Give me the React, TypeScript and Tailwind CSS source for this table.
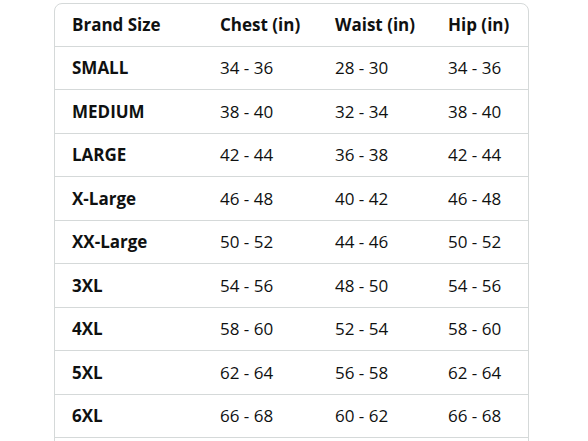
import React from "react";

const rows: [string, string, string, string][] = [
  ["SMALL", "34 - 36", "28 - 30", "34 - 36"],
  ["MEDIUM", "38 - 40", "32 - 34", "38 - 40"],
  ["LARGE", "42 - 44", "36 - 38", "42 - 44"],
  ["X-Large", "46 - 48", "40 - 42", "46 - 48"],
  ["XX-Large", "50 - 52", "44 - 46", "50 - 52"],
  ["3XL", "54 - 56", "48 - 50", "54 - 56"],
  ["4XL", "58 - 60", "52 - 54", "58 - 60"],
  ["5XL", "62 - 64", "56 - 58", "62 - 64"],
  ["6XL", "66 - 68", "60 - 62", "66 - 68"],
];

export default function App() {
  return (
    <div
      className="h-[441px] w-[588px] overflow-hidden bg-white pt-[3px] pl-[54px] text-[#0f1111]"
      style={{ fontFamily: '"Open Sans", "Noto Sans", Arial, sans-serif' }}
    >
      <div className="w-[475px] rounded-t-[8px] border border-[#d5d9d9] text-[17px]">
        <div className="grid h-[43px] grid-cols-[148px_115px_113px_1fr] items-center border-b border-[#d5d9d9] font-bold">
          <div className="pl-[17px]">Brand Size</div>
          <div className="pl-[17px]">Chest (in)</div>
          <div className="pl-[17px]">Waist (in)</div>
          <div className="pl-[17px]">Hip (in)</div>
        </div>
        {rows.map((r) => (
          <div
            key={r[0]}
            className="grid h-[43.45px] grid-cols-[148px_115px_113px_1fr] items-center border-b border-[#d5d9d9]"
          >
            <div className="pl-[17px] font-bold">{r[0]}</div>
            <div className="pl-[17px]">{r[1]}</div>
            <div className="pl-[17px]">{r[2]}</div>
            <div className="pl-[17px]">{r[3]}</div>
          </div>
        ))}
        <div className="h-[43.45px]" />
      </div>
    </div>
  );
}
